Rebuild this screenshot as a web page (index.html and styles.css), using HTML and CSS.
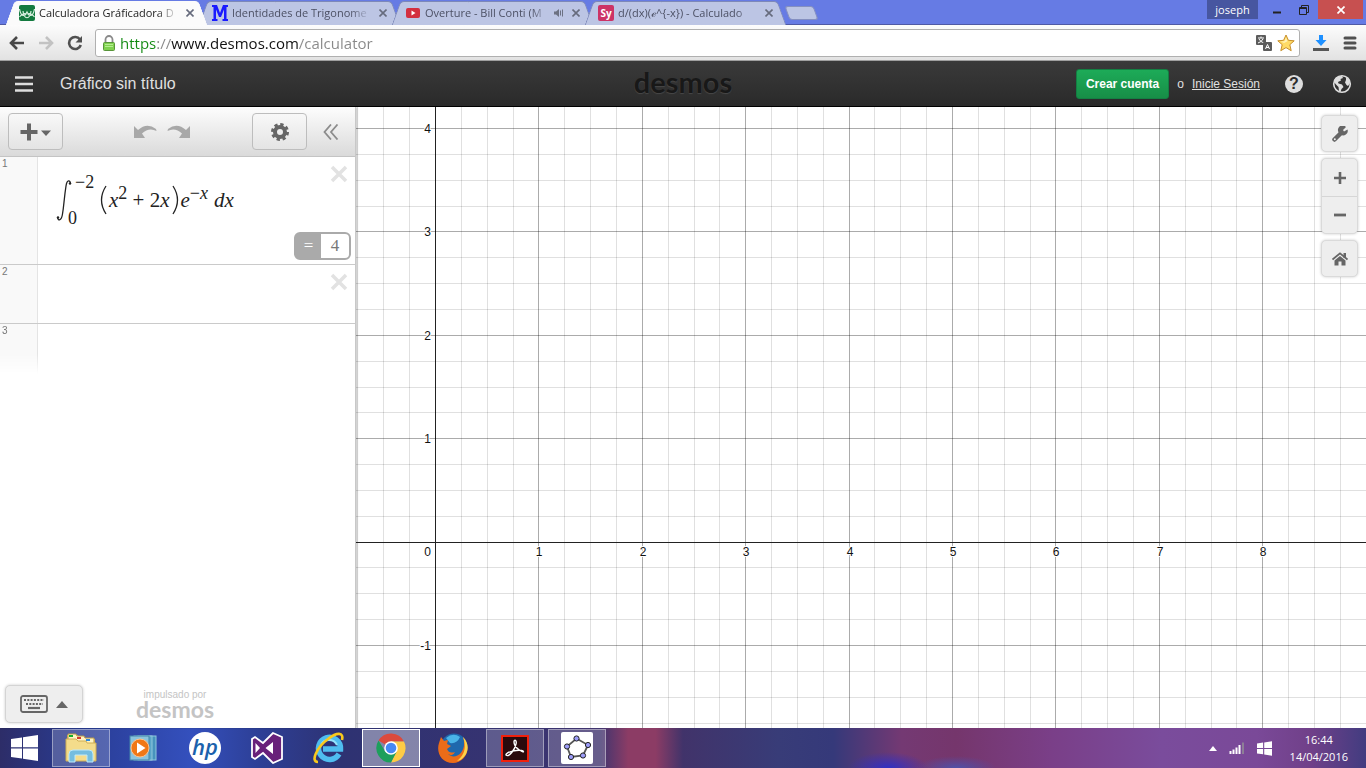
FILE: index.html
```html
<!DOCTYPE html>
<html lang="es">

<head>
    <meta charset="UTF-8">
    <meta name="viewport" content="width=device-width, initial-scale=1.0">
    <title>Calculadora Gráficadora Desmos</title>
    <link rel="stylesheet" href="styles.css">
</head>

<body>
    <!-- Tabs -->
    <div class="tab-strip">
        <div class="tabs">
            <div class="tab active">
                <svg class="favicon" viewBox="0 0 16 16">
                    <rect width="16" height="16" rx="2" fill="#137a3f" />
                    <path d="M0.5 4 C2 12 6 12 8 7 C10 12 14 12 15.500 4 M0.5 12 C4 7 12 7 15.500 12 M4 6 C5 15 11 15 12 6" fill="none" stroke="#d8f0e0" stroke-width="1.2" />
                </svg>
                <button class="tab-title">Calculadora Gráficadora D</button>
                <button class="tab-close" aria-label="Cerrar"><svg viewBox="0 0 8 8"><path d="M0.5 0.5 L7.5 7.5 M7.5 0.5 L0.5 7.5" /></svg></button>
            </div>
            <div class="tab">
                <svg class="favicon" viewBox="0 0 16 16">
                    <path d="M0 0 H5 L8 8 L11 0 H16 V2 H14.5 V14 H16 V16 H10.5 V14 H12 V4.500 L9 12 H7 L4 4.500 V14 H5.500 V16 H0 V14 H1.500 V2 H0 Z" fill="#1a1aff" />
                </svg>
                <button class="tab-title">Identidades de Trigonome</button>
                <button class="tab-close" aria-label="Cerrar"><svg viewBox="0 0 8 8"><path d="M0.5 0.5 L7.5 7.5 M7.5 0.5 L0.5 7.5" /></svg></button>
            </div>
            <div class="tab">
                <svg class="favicon" viewBox="0 0 16 16">
                    <rect x="1" y="3" width="14" height="10" rx="2" fill="#d32f3f" />
                    <path d="M6.500 5.500 L10.500 8 L6.500 10.500 Z" fill="#fff" />
                </svg>
                <button class="tab-title">Overture - Bill Conti (M</button>
                <svg class="sound" viewBox="0 0 10 8">
                    <path d="M0 2.500 H2 L5 0 V8 L2 5.500 H0 Z" fill="#6c7182" />
                    <path d="M6.500 1.500 V6.500 M8.500 0.5 V7.500" stroke="#6c7182" />
                </svg>
                <button class="tab-close" aria-label="Cerrar"><svg viewBox="0 0 8 8"><path d="M0.5 0.5 L7.5 7.5 M7.5 0.5 L0.5 7.5" /></svg></button>
            </div>
            <div class="tab">
                <span class="favicon sy">Sy</span>
                <button class="tab-title">d/(dx)(ℯ^{-x}) - Calculado</button>
                <button class="tab-close" aria-label="Cerrar"><svg viewBox="0 0 8 8"><path d="M0.5 0.5 L7.5 7.5 M7.5 0.5 L0.5 7.5" /></svg></button>
            </div>
            <button class="new-tab" aria-label="Nueva pestaña"></button>
        </div>
        <div class="window-buttons">
            <button class="user">joseph</button>
            <button class="win-btn minimize" aria-label="Minimizar"><svg width="10" height="10" viewBox="0 0 10 10"><path d="M1 7.500 H9" stroke="#222" stroke-width="2" /></svg></button>
            <button class="win-btn restore" aria-label="Restaurar"><svg width="10" height="10" viewBox="0 0 10 10"><path d="M2.500 2 V0.5 H9.500 V7.500 H8 M0.5 2.500 H7.500 V9.500 H0.5 Z M0.5 3.500 H7.500" fill="none" stroke="#222" /></svg></button>
            <button class="win-btn close" aria-label="Cerrar ventana"><svg width="8" height="8" viewBox="0 0 8 8"><path d="M0.5 0.5 L7.500 7.500 M7.500 0.5 L0.5 7.500" stroke="#fff" stroke-width="1.700" /></svg></button>
        </div>
    </div>

    <!-- Address bar -->
    <div class="toolbar">
        <button class="nav-btn" aria-label="Atrás"><svg width="16" height="14" viewBox="0 0 16 14"><path d="M15 7 H2 M8 1 L2 7 L8 13" fill="none" stroke="#484848" stroke-width="2.600" /></svg></button>
        <button class="nav-btn" aria-label="Adelante"><svg width="16" height="14" viewBox="0 0 16 14"><path d="M1 7 H14 M8 1 L14 7 L8 13" fill="none" stroke="#c2c2c2" stroke-width="2.600" /></svg></button>
        <button class="nav-btn" aria-label="Recargar"><svg width="16" height="16" viewBox="0 0 16 16"><path d="M13 4.500 A6 6 0 1 0 13.800 10" fill="none" stroke="#505050" stroke-width="2.600" /><path d="M15 1 V7.500 H8.500 Z" fill="#505050" /></svg></button>
        <div class="address">
            <svg class="lock" width="12" height="16" viewBox="0 0 12 16">
                <path d="M2.500 8 V4.500 A3.500 3.500 0 0 1 9.500 4.500 V8" fill="none" stroke="#8a8a8a" stroke-width="1.800" />
                <rect x="0.5" y="7.500" width="11" height="8" rx="1" fill="#7fd14e" stroke="#58943a" />
                <path d="M2 9.500 H10 M2 11.500 H10" stroke="#b5ec91" />
            </svg>
            <input class="url" type="text" value="https://www.desmos.com/calculator" aria-label="Dirección">
            <button class="nav-btn" aria-label="Traducir"><svg width="16" height="16" viewBox="0 0 16 16">
                    <rect width="10" height="10" rx="1" fill="#5c5c5c" />
                    <path d="M2 3 H8 M5 1.500 V3 M3 4 Q4.500 7 8 8 M7 4 Q5.500 7 2 8" fill="none" stroke="#fff" />
                    <rect x="7" y="7" width="9" height="9" rx="1" fill="#5c5c5c" />
                    <path d="M9.500 14 L11.500 9.500 L13.500 14 M10 12.500 H13" fill="none" stroke="#fff" />
                </svg></button>
            <button class="nav-btn" aria-label="Favorito"><svg width="18" height="18" viewBox="0 0 18 18"><path d="M9 1 L11.400 6.300 L17.200 6.800 L12.800 10.700 L14.200 16.700 L9 13.600 L3.800 16.700 L5.200 10.700 L0.800 6.800 L6.600 6.300 Z" fill="#ffdb66" stroke="#c78f2c" /><path d="M9 3.500 L10.500 7.300 L7 9 L4 7.500 L7.500 7.300 Z" fill="#fff2b8" /></svg></button>
        </div>
        <button class="nav-btn" aria-label="Descargas"><svg width="16" height="16" viewBox="0 0 16 16"><path d="M6 0 H10 V5 H13.500 L8 11 L2.500 5 H6 Z" fill="#1e90ff" /><path d="M0 13 H16 V16 H0 Z" fill="#565656" /></svg></button>
        <button class="nav-btn" aria-label="Menú"><svg width="14" height="14" viewBox="0 0 14 14"><path d="M2 2 H12 M2 7 H12 M2 12 H12" stroke="#505050" stroke-width="3" stroke-linecap="round" /></svg></button>
    </div>

    <!-- Calculator header -->
    <header class="header">
        <div class="header-left">
            <button class="icon-btn" aria-label="Abrir menú"><svg width="18" height="16" viewBox="0 0 18 16"><path d="M0 1.500 H18 M0 8 H18 M0 14.500 H18" stroke="#dedede" stroke-width="2.400" /></svg></button>
            <h1>Gráfico sin título</h1>
        </div>
        <div class="logo">desmos</div>
        <div class="header-right">
            <button class="create">Crear cuenta</button>
            <span class="or">o</span>
            <a class="login" href="#">Inicie Sesión</a>
            <button class="icon-btn help" aria-label="Ayuda"><span>?</span></button>
            <button class="icon-btn" aria-label="Idioma"><svg width="20" height="20" viewBox="0 0 20 20">
                    <circle cx="10" cy="10" r="8.300" fill="none" stroke="#dedede" stroke-width="1.600" />
                    <path d="M3 5 L6 2.500 L10 2 L11 4 L8.500 5 L9 6.500 L6 8 L6.500 9.500 L10 10.500 L11.500 13 L9.500 15 L8.500 18 L7 17 L6.500 13 L4 10.500 L2 8 Z M14 3.500 L16.500 5 L18 9 L16 12 L14.500 11 L13 8.500 L14 6 Z" fill="#dedede" />
                </svg></button>
        </div>
    </header>

    <main class="calculator">
        <aside class="sidebar">
            <div class="expression-bar">
                <button class="bar-btn" aria-label="Agregar"><svg width="32" height="18" viewBox="0 0 32 18"><path d="M9 0.5 V17.500 M0.5 9 H17.500" stroke="#666" stroke-width="4" /><path d="M21 7.500 H31 L26 13 Z" fill="#666" /></svg></button>
                <div class="history">
                    <button class="plain" aria-label="Deshacer"><svg width="23" height="14" viewBox="0 0 23 14"><path d="M0 1 L4 5 Q13 -3 22 4 L22.500 6 Q15 2 8 8.500 L11 13 H0 Z" fill="#a8a8a8" /></svg></button>
                    <button class="plain" aria-label="Rehacer"><svg width="23" height="14" viewBox="0 0 23 14"><path d="M23 1 L19 5 Q10 -3 1 4 L0.5 6 Q8 2 15 8.500 L12 13 H23 Z" fill="#a8a8a8" /></svg></button>
                </div>
                <button class="bar-btn" aria-label="Editar lista"><svg width="18" height="18" viewBox="0 0 18 18"><circle cx="9" cy="9" r="7.600" fill="none" stroke="#666" stroke-width="2.800" stroke-dasharray="3.300 2.668" /><circle cx="9" cy="9" r="5" fill="none" stroke="#666" stroke-width="4" /></svg></button>
                <button class="plain collapse" aria-label="Ocultar lista"><svg width="16" height="16" viewBox="0 0 16 16"><path d="M8 0.5 L1.500 8 L8 15.500 M14.500 0.5 L8 8 L14.500 15.500" fill="none" stroke="#8c8c8c" stroke-width="1.800" /></svg></button>
            </div>

            <div class="expression first">
                <div class="gutter">1</div>
                <div class="expression-body">
                    <div class="formula">
                        <svg class="integral" width="16" height="42" viewBox="0 0 16 42"><path d="M14.500 5 C14.500 1 11 0 10 7 C8 20 8 26 6.500 35 C5.500 42 2 42 1.500 38.500" fill="none" stroke="#222" stroke-width="1.300" /><circle cx="14" cy="4.500" r="1.200" fill="#222" /><circle cx="2" cy="38.500" r="1.200" fill="#222" /></svg>
                        <span class="limits"><span class="upper">−2</span><span class="lower">0</span></span>
                        <svg width="7" height="30" viewBox="0 0 7 29"><path d="M6 0.5 Q-3 14.500 6 28.500" fill="none" stroke="#222" stroke-width="1.300" /></svg>
                        <span class="term"><i>x</i><sup>2</sup> + 2<i>x</i></span>
                        <svg width="7" height="30" viewBox="0 0 7 29"><path d="M1 0.5 Q10 14.500 1 28.500" fill="none" stroke="#222" stroke-width="1.300" /></svg>
                        <span class="term"><i>e</i><sup>−<i>x</i></sup></span>
                        <span class="term diff"><i>dx</i></span>
                    </div>
                    <button class="delete" aria-label="Borrar"><svg width="18" height="18" viewBox="0 0 18 18"><path d="M2 2 L16 16 M16 2 L2 16" /></svg></button>
                    <output class="result"><span class="equals">=</span><span class="value">4</span></output>
                </div>
            </div>
            <div class="expression">
                <div class="gutter">2</div>
                <div class="expression-body">
                    <input class="field" type="text" aria-label="Expresión 2">
                    <button class="delete" aria-label="Borrar"><svg width="18" height="18" viewBox="0 0 18 18"><path d="M2 2 L16 16 M16 2 L2 16" /></svg></button>
                </div>
            </div>
            <div class="expression last">
                <div class="gutter">3</div>
                <div class="expression-body">
                    <input class="field" type="text" aria-label="Expresión 3">
                </div>
            </div>

            <div class="sidebar-footer">
                <button class="keypad" aria-label="Mostrar teclado">
                    <svg width="28" height="18" viewBox="0 0 28 18"><rect x="1" y="1" width="26" height="16" rx="2" fill="none" stroke="#666" stroke-width="1.800" /><path d="M4 5 H24 M6 9 H23" stroke="#666" stroke-width="2.200" stroke-dasharray="2 1.300" /><path d="M8 13 H20" stroke="#666" stroke-width="2.200" /></svg>
                    <svg width="12" height="7" viewBox="0 0 12 7"><path d="M6 0 L12 7 H0 Z" fill="#666" /></svg>
                </button>
                <div class="powered">
                    <span>impulsado por</span>
                    <strong>desmos</strong>
                </div>
            </div>
        </aside>

        <section class="graph">
            <svg id="grid"></svg>
            <div class="graph-controls">
                <button class="graph-btn" aria-label="Configuración"><svg width="16" height="16" viewBox="0 0 16 16"><path d="M2.500 13.500 L9 7" stroke="#666" stroke-width="4.500" stroke-linecap="round" /><path d="M14 1 L11 4 L12 5.500 L15.500 3.500 A4.500 4.500 0 0 1 8.500 8.500 L7 7 A4.500 4.500 0 0 1 14 1 Z" fill="#666" /><circle cx="2.800" cy="13.300" r="1" fill="#eee" /></svg></button>
                <div class="zoom-group">
                    <button class="graph-btn" aria-label="Acercar"><svg width="12" height="12" viewBox="0 0 12 12"><path d="M6 0 V12 M0 6 H12" stroke="#666" stroke-width="2.600" /></svg></button>
                    <button class="graph-btn" aria-label="Alejar"><svg width="12" height="12" viewBox="0 0 12 12"><path d="M0 6 H12" stroke="#666" stroke-width="2.800" /></svg></button>
                </div>
                <button class="graph-btn" aria-label="Vista inicial"><svg width="16" height="14" viewBox="0 0 16 14"><path d="M0.5 7.500 L8 1.300 L15.500 7.500" fill="none" stroke="#666" stroke-width="1.800" /><path d="M11.500 1 H14 V6 H11.500 Z M8 4 L13.500 8.500 V13.500 H9.500 V9.500 H6.500 V13.500 H2.500 V8.500 Z" fill="#666" /></svg></button>
            </div>
        </section>
    </main>

    <!-- Windows taskbar -->
    <footer class="taskbar">
        <button class="start" aria-label="Inicio"><svg width="27" height="26" viewBox="0 0 27 26"><path d="M0 4 L11 2.400 V12.300 H0 Z M12 2.300 L27 0 V12.300 H12 Z M0 13.500 H11 V23.500 L0 22 Z M12 13.500 H27 V26 L12 23.700 Z" fill="#fff" /></svg></button>
        <button class="task open" aria-label="Explorador"><svg width="34" height="30" viewBox="0 0 34 30">
                <path d="M3 2 H14 V6 H31 V28 H3 Z" fill="#d8b65c" />
                <path d="M4 1 H12 L13 3 H20 L21 5 H30 V12 H4 Z" fill="#fff4c4" stroke="#b79846" />
                <path d="M5 2 H9 V4 H5 Z" fill="#12b02c" /><path d="M13 4 H17 V6 H13 Z" fill="#d33a2c" /><path d="M22 6 H26 V8 H22 Z" fill="#2c8ae0" />
                <path d="M2 6 H12 L14 8 H22 L23 10 H32 V28 H2 Z" fill="#f4dc8b" stroke="#cfae55" />
                <path d="M5 29 V21 Q5 17 9 17 H25 Q29 17 29 21 V29 H23 V22 H11 V29 Z" fill="#74bde0" stroke="#bfe9fa" />
            </svg></button>
        <button class="task" aria-label="Reproductor"><svg width="28" height="26" viewBox="0 0 28 26">
                <rect x="9" y="1" width="18" height="24" fill="#4794bd" stroke="#90c7dd" /><rect x="5" y="1" width="18" height="24" fill="#5aa6ca" stroke="#90c7dd" /><rect x="1" y="1" width="19" height="24" fill="#8bc4dd" stroke="#4585a8" />
                <circle cx="11" cy="13" r="9" fill="#f07816" stroke="#ffc28c" /><path d="M8 7.500 L16.500 13 L8 18.500 Z" fill="#fff" />
            </svg></button>
        <button class="task" aria-label="HP"><span class="hp">hp</span></button>
        <button class="task" aria-label="Visual Studio"><svg width="32" height="32" viewBox="0 0 32 32"><path d="M22 1 L31 5 V27 L22 31 L12 21 L4 27 L1 25 V7 L4 5 L12 11 Z" fill="#68217a" stroke="#fff" stroke-width="1.800" /><path d="M22 10 V22 L14.500 16 Z M4.500 11 L9 16 L4.500 21 Z" fill="#fff" /></svg></button>
        <button class="task" aria-label="Internet Explorer"><svg width="32" height="32" viewBox="0 0 32 32">
                <path d="M26 22 A11 11 0 1 1 27.500 17 H10" fill="none" stroke="#4fbdf0" stroke-width="5.500" /><path d="M8 13 A9 9 0 0 1 24 13" fill="none" stroke="#93e2fb" stroke-width="2" />
                <path d="M5 30 C-3 30 4 15 15 7 C24 0 31 0 29 8" fill="none" stroke="#f9c91d" stroke-width="2.600" />
            </svg></button>
        <button class="task open current" aria-label="Chrome"><svg width="30" height="30" viewBox="0 0 30 30">
                <path d="M15 15 L2.500 7.500 A14.500 14.500 0 0 1 28 8.500 H15 Z" fill="#dc4a3d" /><path d="M28 8.500 A14.500 14.500 0 0 1 15 29.500 L21 17 L15 8.500 Z" fill="#fdcb46" /><path d="M2.500 7.500 A14.500 14.500 0 0 0 15 29.500 L20.500 19 L9.500 19 Z" fill="#1d9f5c" />
                <circle cx="15" cy="15" r="6.800" fill="#fff" /><circle cx="15" cy="15" r="5.300" fill="#4688f4" />
            </svg></button>
        <button class="task" aria-label="Firefox"><svg width="32" height="32" viewBox="0 0 32 32">
                <circle cx="17" cy="15" r="13.500" fill="#1f68ad" /><path d="M9 6 Q16 0 23 5 Q20 12 13 11 Z" fill="#4ab4e8" />
                <path d="M26 5 C36 16 28 31 16 31 C4 31 -1 20 2 11 L4 5 L7 9 L11 8 L10 12 L14 14 L10 17 Q12 22 18 20 Q16 25 11 22 C18 29 31 20 26 5 Z" fill="#ec6c18" />
                <path d="M26 5 C36 15 28 28 20 29 C29 22 29 13 26 5 Z" fill="#fbd34a" />
            </svg></button>
        <button class="task open" aria-label="Adobe Reader"><svg width="28" height="27" viewBox="0 0 28 27"><rect x="1" y="1" width="26" height="25" fill="#2a0a0c" stroke="#f0200c" stroke-width="2" /><path d="M5 20 C4 17 18 14 22 16 C25 19 13 14 13 7 C13 4 16 5 15 9 C14 14 8 23 5 20 Z" fill="none" stroke="#fff" stroke-width="1.400" /></svg></button>
        <button class="task open" aria-label="GeoGebra"><svg width="32" height="32" viewBox="0 0 32 32">
                <rect width="32" height="32" rx="2" fill="#fff" /><path d="M15.500 6.500 L27 13 L22 23.500 L10 25 L6 14.500 Z" fill="none" stroke="#555" stroke-width="1.800" />
                <g fill="#9c9cf8" stroke="#222"><circle cx="15.500" cy="6.500" r="2.600" /><circle cx="27" cy="13" r="2.600" /><circle cx="22" cy="23.500" r="2.600" /><circle cx="10" cy="25" r="2.600" /><circle cx="6" cy="14.500" r="2.600" /></g>
            </svg></button>
        <div class="tray">
            <svg width="8" height="5" viewBox="0 0 8 5"><path d="M4 0 L8 5 H0 Z" fill="#fff" /></svg>
            <svg width="16" height="12" viewBox="0 0 16 12"><path d="M1.500 12 V9 M4.500 12 V7.500 M7.500 12 V5.500 M10.500 12 V3" stroke="#fff" stroke-width="2" /><path d="M14 12 V0.5" stroke="#8d7f96" stroke-width="2" /></svg>
            <svg width="15" height="15" viewBox="0 0 27 26"><path d="M0 4 L11 2.400 V12 H0 Z M13 2.300 L27 0 V12 H13 Z M0 14 H11 V23.500 L0 22 Z M13 14 H27 V26 L13 23.700 Z" fill="#fff" /></svg>
            <div class="clock">
                <span>16:44</span>
                <span>14/04/2016</span>
            </div>
        </div>
    </footer>

    <script src="script.js"></script>
</body>

</html>
```
FILE: styles.css
```css
/* Global styles */
* {
    box-sizing: border-box;
    margin: 0;
    padding: 0;
}

body {
    height: 100vh;
    display: flex;
    flex-direction: column;
    overflow: hidden;
    font-family: "Liberation Sans", Arial, sans-serif;
    font-size: 12px;
    color: #222;
    background: #fff;
}

button,
input {
    font: inherit;
    color: inherit;
    border: none;
    outline: none;
    background: none;
}

button {
    display: flex;
    align-items: center;
    justify-content: center;
    flex-shrink: 0;
}

svg {
    display: block;
    flex-shrink: 0;
}

/* Tabs */
.tab-strip {
    height: 25px;
    display: flex;
    justify-content: space-between;
    background: #667be4;
    border-bottom: 1px solid #4f5aa5;
    font-family: "Open Sans", "Noto Sans", sans-serif;
    font-size: 11px;
    flex-shrink: 0;
}

.tabs {
    display: flex;
    padding-left: 10px;
    padding-top: 1px;
}

.tab {
    position: relative;
    width: 193px;
    height: 24px;
    display: flex;
    align-items: center;
    gap: 4px;
    padding: 0 5px 0 9px;
    color: #4c5064;
}

/* slanted sides, drawn behind the title */
.tab::before,
.tab::after {
    content: "";
    position: absolute;
    z-index: 0;
    top: 0;
    bottom: 0;
    width: 60%;
    background: #bcc5e4;
    border-top: 1px solid #7d88b8;
}

.tab::before {
    left: 0;
    transform: skewX(-20deg);
    border-left: 1px solid #7d88b8;
    border-top-left-radius: 4px;
}

.tab::after {
    right: 0;
    transform: skewX(20deg);
    border-right: 1px solid #7d88b8;
    border-top-right-radius: 4px;
}

.tab.active {
    z-index: 1;
    color: #222;
}

.tab.active::before,
.tab.active::after {
    background: #fbfbfb;
    border-color: #fbfbfb;
}

.tab > * {
    position: relative;
    z-index: 1;
}

.favicon {
    width: 16px;
    height: 16px;
    flex-shrink: 0;
}

.favicon.sy {
    background: #cc3366;
    color: white;
    border-radius: 2px;
    font-size: 10px;
    font-weight: bold;
    line-height: 16px;
    text-align: center;
}

.tab-title {
    flex: 1 1 0;
    min-width: 0;
    justify-content: flex-start;
    white-space: nowrap;
    line-height: 18px;
    -webkit-mask-image: linear-gradient(to right, #000 85%, transparent);
    mask-image: linear-gradient(to right, #000 85%, transparent);
}

.sound {
    width: 10px;
    height: 8px;
}

.tab-close {
    width: 16px;
    height: 16px;
}

.tab-close svg {
    width: 8px;
    height: 8px;
    stroke: #666b7d;
    stroke-width: 1.6px;
}

.new-tab {
    width: 29px;
    height: 14px;
    margin: 5px 0 0 5px;
    background: #bcc5e4;
    border: 1px solid #8590c0;
    border-radius: 3px;
    transform: skewX(20deg);
}

.window-buttons {
    display: flex;
    align-items: flex-start;
    padding-right: 3px;
}

.user {
    width: 51px;
    height: 19px;
    margin-right: 5px;
    background: #4756a0;
    color: white;
}

.win-btn {
    width: 27px;
    height: 19px;
}

.win-btn.close {
    width: 45px;
    background: #c75050;
}

.win-btn.restore {
    margin-right: 1px;
}

/* Address bar */
.toolbar {
    height: 36px;
    display: flex;
    align-items: center;
    gap: 12px;
    padding: 0 8px;
    background: linear-gradient(#fcfcfc, #e2e2e2);
    border-bottom: 1px solid #a0a0a0;
    flex-shrink: 0;
}

.nav-btn {
    min-width: 17px;
    height: 20px;
}

.address {
    flex: 1;
    height: 28px;
    display: flex;
    align-items: center;
    gap: 5px;
    padding: 0 4px 0 7px;
    background: white;
    border: 1px solid #b0b0b0;
    border-radius: 3px;
}

/* scheme green, host black, the rest grey */
.url {
    flex: 1;
    min-width: 0;
    height: 24px;
    font-family: "Open Sans", "Noto Sans", sans-serif;
    font-size: 15px;
    background: linear-gradient(to right, #128a12 36px, #888 36px 51px, #111 51px 178px, #888 178px);
    -webkit-background-clip: text;
    background-clip: text;
    -webkit-text-fill-color: transparent;
}

/* Calculator header */
.header {
    height: 46px;
    display: grid;
    grid-template-columns: 1fr auto 1fr;
    align-items: center;
    padding: 0 14px;
    background: linear-gradient(#3a3a3a, #2a2a2a);
    border-bottom: 1px solid #000;
    color: #e0e0e0;
    flex-shrink: 0;
}

.header-left,
.header-right {
    display: flex;
    align-items: center;
}

.header-left {
    gap: 26px;
}

.header h1 {
    font-size: 16px;
    font-weight: normal;
}

.icon-btn {
    width: 20px;
    height: 20px;
}

.logo {
    padding-bottom: 4px;
    font-family: Lato, sans-serif;
    font-size: 29px;
    font-weight: bold;
    line-height: 36px;
    color: #181818;
    text-shadow: 0 1px 1px #484848;
}

.header-right {
    justify-content: flex-end;
}

.create {
    height: 30px;
    padding: 0 9px;
    border: 1px solid #138043;
    border-radius: 3px;
    background: linear-gradient(#1dab58, #178e47);
    color: white;
    font-weight: bold;
}

.or {
    margin: 0 8px;
}

.login {
    color: inherit;
}

.help {
    margin: 0 28px 0 24px;
}

.help span {
    width: 18px;
    height: 18px;
    border-radius: 50%;
    background: #dedede;
    color: #2c2c2c;
    font-size: 16px;
    font-weight: bold;
    line-height: 18px;
}

/* Expression list */
.calculator {
    flex: 1;
    min-height: 0;
    display: flex;
}

.sidebar {
    position: relative;
    z-index: 1;
    width: 356px;
    display: flex;
    flex-direction: column;
    flex-shrink: 0;
    background: white;
    border-right: 1px solid #c8c8c8;
    box-shadow: 1px 0 2px rgba(0, 0, 0, 0.25);
}

.expression-bar {
    height: 50px;
    display: flex;
    align-items: center;
    padding: 0 8px;
    background: linear-gradient(#fdfdfd, #dadada);
    border-bottom: 1px solid #c4c4c4;
}

.bar-btn {
    width: 55px;
    height: 37px;
    border: 1px solid #bdbdbd;
    border-radius: 4px;
    background: linear-gradient(#f8f8f8, #e4e4e4);
}

.history {
    flex: 1;
    display: flex;
    justify-content: center;
    gap: 10px;
    padding-left: 9px;
}

.collapse {
    width: 40px;
    height: 30px;
    padding-left: 8px;
}

.expression {
    min-height: 59px;
    display: flex;
    border-bottom: 1px solid #cacaca;
}

.expression.first {
    min-height: 108px;
}

.expression.last {
    min-height: 50px;
    border-bottom: none;
}

.gutter {
    width: 38px;
    padding: 1px 2px;
    background: #f9f9f9;
    border-right: 1px solid #e4e4e4;
    color: #777;
    font-size: 10px;
    line-height: 12px;
}

.last .gutter {
    -webkit-mask-image: linear-gradient(#000 60%, transparent);
    mask-image: linear-gradient(#000 60%, transparent);
}

.expression-body {
    flex: 1;
    display: grid;
    grid-template-columns: 1fr auto;
    align-items: start;
    padding: 8px 4px 4px 18px;
}

.field {
    width: 100%;
    height: 30px;
}

.delete {
    width: 24px;
    height: 18px;
}

.delete path {
    stroke: #e2e2e2;
    stroke-width: 3.5px;
}

.formula {
    display: flex;
    align-items: center;
    margin-top: 9px;
    height: 52px;
    font-family: "Liberation Serif", serif;
    font-size: 21px;
    color: #222;
}

.limits {
    display: flex;
    flex-direction: column;
    align-self: stretch;
    justify-content: space-between;
    width: 31px;
    margin-left: -4px;
    margin-right: 1px;
    font-size: 18px;
    line-height: 16px;
}

.upper {
    padding-left: 7px;
}

.term {
    padding: 0 2px;
    line-height: 24px;
    white-space: nowrap;
}

.term sup {
    font-size: 18px;
    line-height: 0;
}

.diff {
    padding-left: 4px;
}

.result {
    grid-column: 2;
    align-self: end;
    justify-self: end;
    width: 57px;
    height: 28px;
    display: flex;
    border: 2px solid #aaa;
    border-radius: 6px;
    margin-left: -40px;
    font-family: "Liberation Serif", serif;
    font-size: 17px;
    line-height: 24px;
    text-align: center;
    color: #777;
}

.equals {
    width: 25px;
    background: #aaa;
    color: white;
}

.value {
    flex: 1;
}

.sidebar-footer {
    margin-top: auto;
    display: flex;
    align-items: flex-end;
    gap: 53px;
    padding: 0 5px 5px;
}

.keypad {
    width: 78px;
    height: 38px;
    gap: 8px;
    background: #eee;
    border: 1px solid #d4d4d4;
    border-radius: 5px;
    box-shadow: 0 0 3px rgba(0, 0, 0, 0.2);
}

.powered {
    display: flex;
    flex-direction: column;
    align-items: center;
    padding-bottom: 4px;
    color: #c4c4c4;
    font-size: 10px;
    line-height: 10px;
}

.powered strong {
    font-family: Lato, sans-serif;
    font-size: 23px;
    font-weight: bold;
    line-height: 19px;
}

/* Graph paper */
.graph {
    position: relative;
    flex: 1;
    min-width: 0;
    overflow: hidden;
}

#grid {
    width: 100%;
    height: 100%;
}

#grid .minor {
    fill: #000;
    fill-opacity: 0.12;
}

#grid .major {
    fill: #000;
    fill-opacity: 0.33;
}

#grid .axis {
    fill: #222;
}

#grid text {
    fill: #111;
    stroke: #fff;
    stroke-width: 2px;
    paint-order: stroke;
}

.graph-controls {
    position: absolute;
    top: 8px;
    right: 8px;
    display: flex;
    flex-direction: column;
    gap: 6px;
}

.graph-btn,
.zoom-group {
    width: 37px;
    background: #eee;
    border: 1px solid #dadada;
    border-radius: 5px;
    box-shadow: 0 0 3px rgba(0, 0, 0, 0.2);
}

.graph-btn {
    height: 37px;
}

.zoom-group .graph-btn {
    width: 35px;
    border: none;
    box-shadow: none;
}

.zoom-group .graph-btn + .graph-btn {
    border-top: 1px solid #d6d6d6;
    border-radius: 0 0 5px 5px;
}

/* Taskbar */
.taskbar {
    height: 40px;
    display: flex;
    align-items: center;
    gap: 4px;
    flex-shrink: 0;
    color: white;
    font-family: "Open Sans", "Noto Sans", sans-serif;
    font-size: 11px;
    background:
        radial-gradient(ellipse 40px 16px at 65% 100%, #3030c4, transparent),
        radial-gradient(ellipse 40px 12px at 70% 100%, #5050a8, transparent),
        linear-gradient(to right, #2d2d68, #293c94 6%, #3450bd 14%, #2d3f96 19%, #2e3272 25%, #373371 38%, #42356f 44%, #8c3c65 46%, #8c3c65 48%, #41336a 50%, #383c78 57%, #35397a 61%, #743973 66%, #75366c 70%, #7a3f88 77%, #7a4c9c 85%, #7a4998 92%, #704089 96%, #423c80);
}

.start {
    width: 48px;
    height: 40px;
}

.task {
    width: 58px;
    height: 38px;
}

.task.open {
    background: rgba(255, 255, 255, 0.2);
    border: 1px solid rgba(255, 255, 255, 0.4);
}

.task.current {
    background: rgba(255, 255, 255, 0.4);
    border-color: #fff;
}

.hp {
    width: 32px;
    height: 32px;
    border-radius: 50%;
    background: white;
    color: #1b62ac;
    font-size: 22px;
    font-style: italic;
    font-weight: 600;
    line-height: 28px;
}

.tray {
    flex: 1;
    display: flex;
    align-items: center;
    justify-content: flex-end;
    gap: 12px;
    padding-right: 18px;
}

.clock {
    display: flex;
    flex-direction: column;
    align-items: center;
    margin-left: 6px;
    line-height: 17px;
}
```
FILE: script.js
```js
const grid = document.getElementById('grid');
const SVG_NS = 'http://www.w3.org/2000/svg';

// position of (0, 0) inside the graph and pixels per unit
const origin = { x: 79, y: 434.6 };
const unit = 103.4;
const step = unit / 4;

const addRect = (x, y, width, height, className) => {
    const rect = document.createElementNS(SVG_NS, 'rect');
    rect.setAttribute('x', x);
    rect.setAttribute('y', y);
    rect.setAttribute('width', width);
    rect.setAttribute('height', height);
    rect.setAttribute('class', className);
    grid.appendChild(rect);
};

const addLabel = (x, y, text, anchor) => {
    const label = document.createElementNS(SVG_NS, 'text');
    label.setAttribute('x', x);
    label.setAttribute('y', y);
    label.setAttribute('text-anchor', anchor);
    label.textContent = text;
    grid.appendChild(label);
};

const lineClass = i => i === 0 ? 'axis' : i % 4 === 0 ? 'major' : 'minor';

const drawGrid = () => {
    const { width, height } = grid.getBoundingClientRect();
    grid.innerHTML = '';

    const left = Math.ceil(-origin.x / step);
    const right = Math.floor((width - origin.x) / step);
    const top = Math.floor(origin.y / step);
    const bottom = Math.ceil((origin.y - height) / step);

    for (let i = left; i <= right; i++) {
        addRect(Math.round(origin.x + i * step), 0, 1, height, lineClass(i));
    }
    for (let i = bottom; i <= top; i++) {
        addRect(0, Math.round(origin.y - i * step), width, 1, lineClass(i));
    }

    // labels, skipping the ones that would not fit at the right edge
    for (let i = left; i <= right; i++) {
        const x = Math.round(origin.x + i * step);
        if (i % 4 === 0 && i !== 0 && x + 8 < width) {
            addLabel(x + 1, Math.round(origin.y) + 14, i / 4, 'middle');
        }
    }
    for (let i = bottom; i <= top; i++) {
        if (i % 4 === 0 && i !== 0) {
            addLabel(origin.x - 4, Math.round(origin.y - i * step) + 5, i / 4, 'end');
        }
    }
    addLabel(origin.x - 4, Math.round(origin.y) + 14, 0, 'end');
};

window.addEventListener('resize', drawGrid);
drawGrid();
```
